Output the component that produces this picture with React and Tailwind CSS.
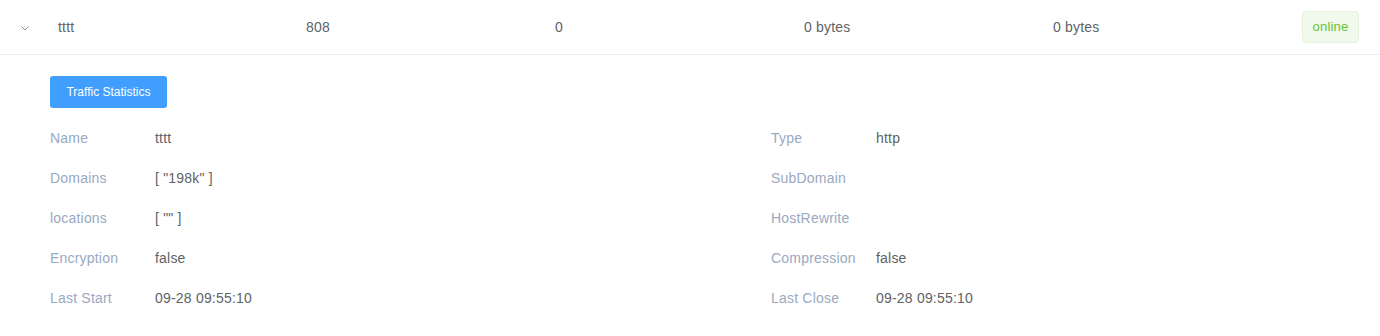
const proxy = {
  name: 'tttt',
  port: 808,
  conns: 0,
  trafficIn: '0 bytes',
  trafficOut: '0 bytes',
  status: 'online',
};

const leftFields = [
  ['Name', 'tttt'],
  ['Domains', '[ "198k" ]'],
  ['locations', '[ "" ]'],
  ['Encryption', 'false'],
  ['Last Start', '09-28 09:55:10'],
];

const rightFields = [
  ['Type', 'http'],
  ['SubDomain', ''],
  ['HostRewrite', ''],
  ['Compression', 'false'],
  ['Last Close', '09-28 09:55:10'],
];

function Field({ label, value }) {
  return (
    <div className="flex h-10 items-center text-sm tracking-[0.2px]">
      <span className="w-[105px] shrink-0 text-[#99a9bf]">{label}</span>
      <span className="text-[#606266]">{value}</span>
    </div>
  );
}

export default function App() {
  return (
    <div className="w-[1380px] h-[336px] bg-white overflow-hidden text-[#606266]" style={{ fontFamily: '"Liberation Sans", Arial, sans-serif' }}>
      <div className="grid grid-cols-[48px_248px_249px_249px_249px_249px_1fr] h-[55px] items-center border-b border-[#ebeef5] text-sm tracking-[0.2px]">
        <div className="flex justify-center pl-[1px]">
          <svg width="10" height="10" viewBox="0 0 10 10" className="mt-[2px]">
            <path d="M1.5 3.5 L5 7 L8.5 3.5" fill="none" stroke="#8a8f99" strokeWidth="1" />
          </svg>
        </div>
        <div className="px-[10px]">{proxy.name}</div>
        <div className="px-[10px]">{proxy.port}</div>
        <div className="px-[10px]">{proxy.conns}</div>
        <div className="px-[10px]">{proxy.trafficIn}</div>
        <div className="px-[10px]">{proxy.trafficOut}</div>
        <div className="px-[10px]">
          <span className="inline-flex h-8 w-[57px] items-center justify-center rounded border border-[#e1f3d8] bg-[#f0f9eb] text-[13px] text-[#67c23a]">
            {proxy.status}
          </span>
        </div>
      </div>

      <div className="pl-[50px] pt-[21px]">
        <button className="h-8 w-[117px] rounded-[3px] bg-[#409eff] text-xs font-medium text-white">
          Traffic Statistics
        </button>
        <div className="mt-[10px] grid grid-cols-[721px_1fr]">
          <div>
            {leftFields.map(([label, value]) => (
              <Field key={label} label={label} value={value} />
            ))}
          </div>
          <div>
            {rightFields.map(([label, value]) => (
              <Field key={label} label={label} value={value} />
            ))}
          </div>
        </div>
      </div>
    </div>
  );
}
